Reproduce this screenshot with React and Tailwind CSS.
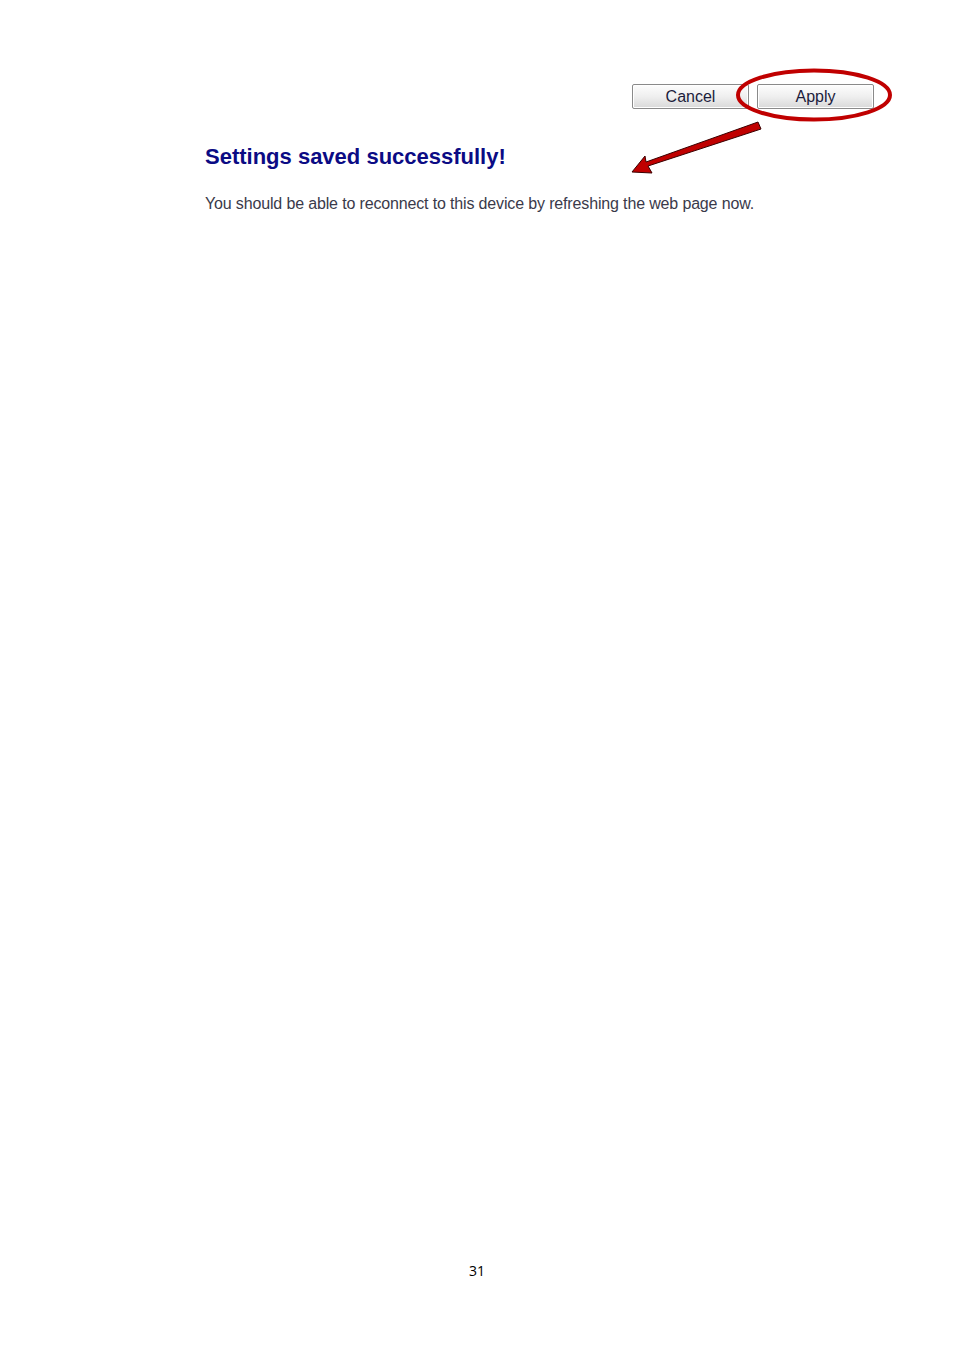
import React from 'react';

const Button = ({ label }) => (
  <button
    type="button"
    className="w-[117px] h-[25px] rounded-[2px] border border-[#8a8a8a] bg-gradient-to-b from-[#fdfdfd] via-[#efefef] to-[#d9d9d9] text-[16px] leading-none text-[#1c1c3c] shadow-[inset_0_0_0_1px_#ffffff]"
  >
    {label}
  </button>
);

const App = () => {
  return (
    <div className="relative w-[954px] h-[1350px] bg-white font-['Liberation_Sans',Arial,sans-serif]">
      {/* buttons row */}
      <div className="flex justify-end gap-[8px] pt-[84px] pr-[80px]">
        <Button label="Cancel" />
        <Button label="Apply" />
      </div>

      {/* message */}
      <div className="pl-[205px] pt-[35px]">
        <h2 className="text-[22px] font-bold leading-[26px] text-[#0b0b84]">Settings saved successfully!</h2>
        <p className="mt-[24px] text-[16px] leading-[20px] text-[#3a3a4a] tracking-[-0.15px]">
          You should be able to reconnect to this device by refreshing the web page now.
        </p>
      </div>

      {/* red highlight ellipse and arrow over the page */}
      <svg className="absolute left-0 top-0 pointer-events-none" width="954" height="200" viewBox="0 0 954 200">
        <ellipse cx="814" cy="95" rx="76" ry="24.5" fill="none" stroke="#c00000" strokeWidth="4" />
        <polygon
          points="758,122 761,129 648,166 652,173 632,172 645,156 646,162"
          fill="#c00000"
          stroke="#3a0000"
          strokeWidth="1"
        />
      </svg>

      {/* page number */}
      <div className="absolute left-0 right-0 top-[1260px] text-center text-[14px] text-black font-['Open_Sans',sans-serif]">
        31
      </div>
    </div>
  );
};

export default App;
